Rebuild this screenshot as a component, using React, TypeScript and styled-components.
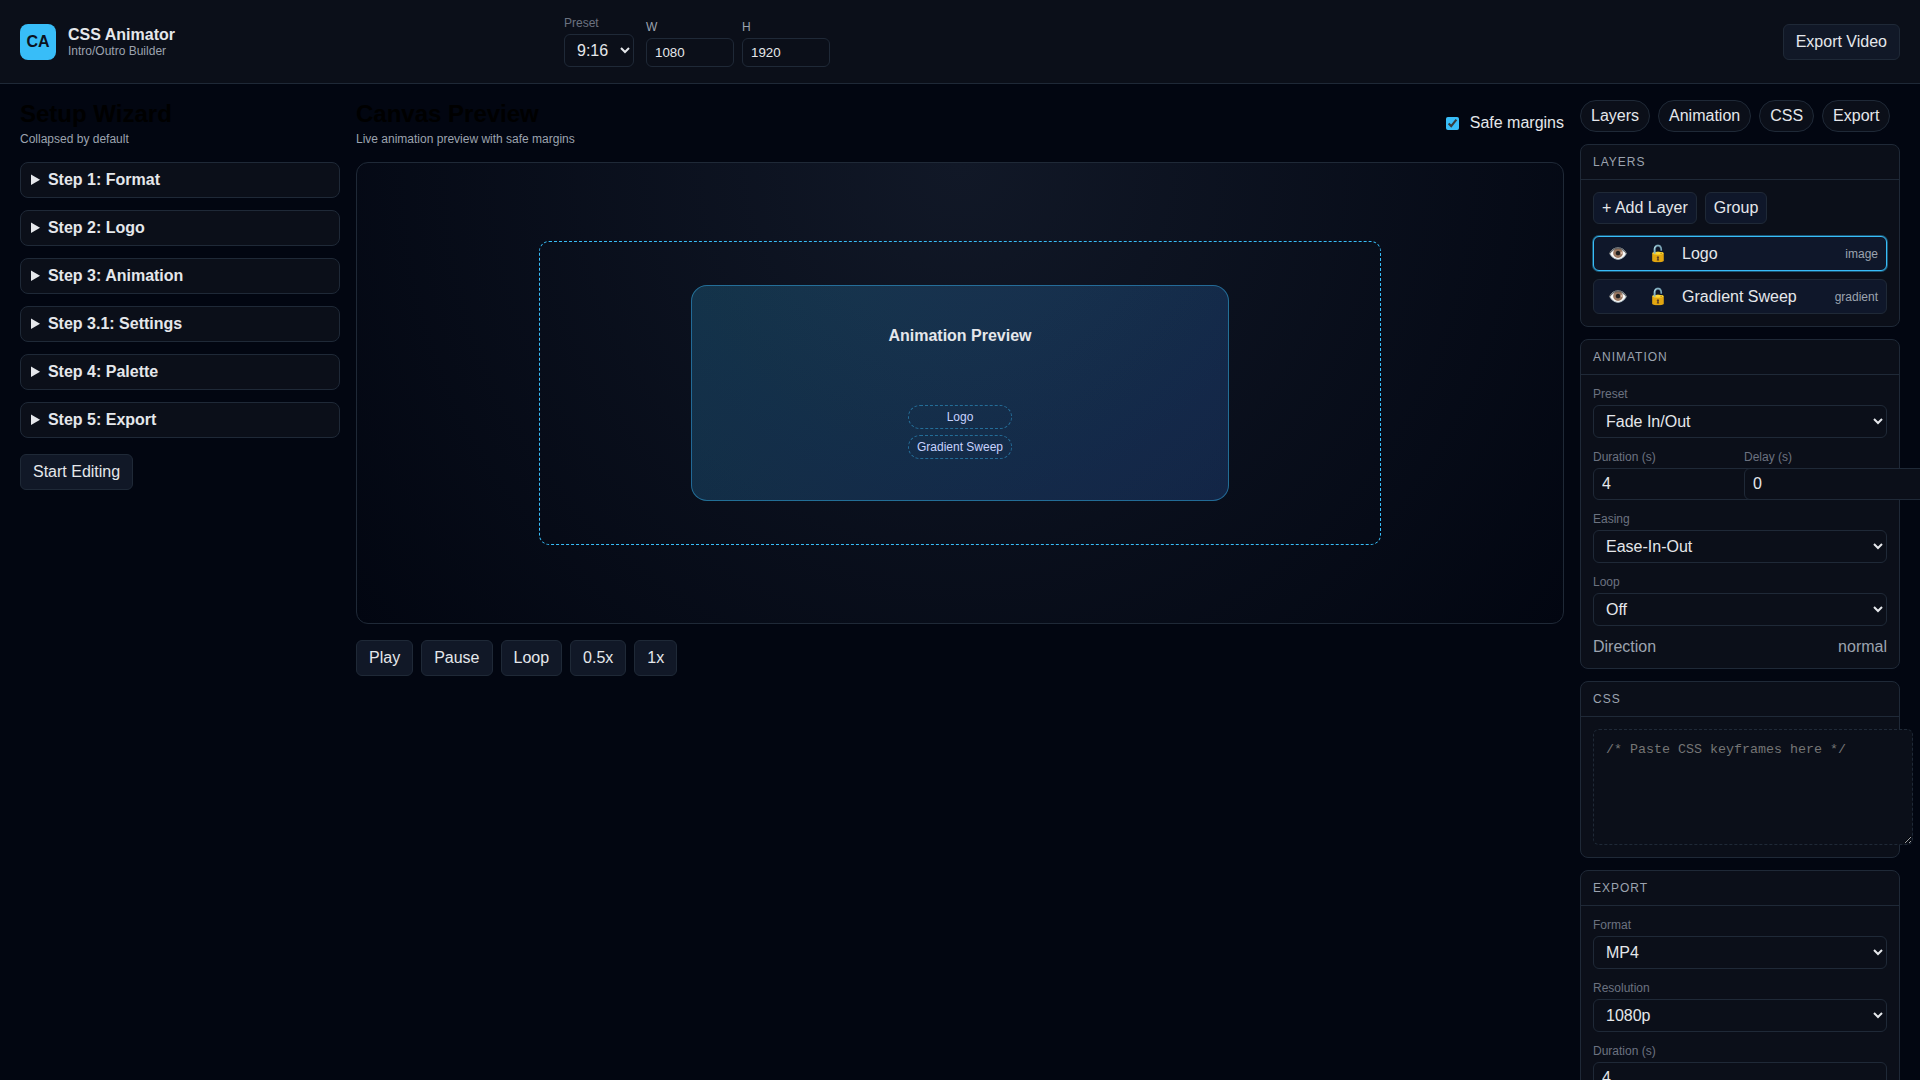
import React, { useState } from "react";
import styled, { createGlobalStyle, css } from "styled-components";

const color = {
  page: "#020611",
  panel: "#0b0f19",
  raised: "#111827",
  row: "#0f172a",
  line: "#1f2937",
  text: "#e5e7eb",
  muted: "#9ca3af",
  faint: "#6b7280",
  accent: "#38bdf8",
};

const GlobalStyle = createGlobalStyle`
  body {
    margin: 0;
    background: ${color.page};
    font-family: "Liberation Sans", Arial, sans-serif;
    overflow-x: hidden;
  }
`;

const Header = styled.header`
  display: grid;
  grid-template-columns: 1.2fr 2fr 1fr;
  align-items: center;
  gap: 16px;
  padding: 16px 20px;
  background: ${color.panel};
  border-bottom: 1px solid ${color.line};
  color: ${color.text};
`;

const Brand = styled.div`
  display: flex;
  align-items: center;
  gap: 12px;
`;

const BrandMark = styled.div`
  display: grid;
  place-items: center;
  width: 36px;
  height: 36px;
  border-radius: 8px;
  background: ${color.accent};
  color: #0b1220;
  font-weight: 700;
`;

const BrandName = styled.div`
  font-weight: 700;
`;

const Caption = styled.div`
  font-size: 12px;
  color: ${color.muted};
`;

const FormatControls = styled.div`
  display: flex;
  align-items: flex-end;
  gap: 12px;
`;

const SizeControls = styled.div`
  display: flex;
  gap: 8px;
`;

const HeaderActions = styled.div`
  display: flex;
  justify-content: flex-end;
`;

const Field = styled.label<{ $strong?: boolean }>`
  display: grid;
  gap: 4px;
  font-size: 12px;
  color: ${(p) => (p.$strong ? color.muted : color.faint)};
`;

const control = css`
  padding: 6px 8px;
  border: 1px solid ${color.line};
  border-radius: 6px;
  background: ${color.panel};
  color: ${color.text};
  font-family: inherit;
`;

const Select = styled.select`
  ${control}
  font-size: 16px;
`;

const Input = styled.input`
  ${control}
  font-size: 16px;
`;

const SizeInput = styled.input`
  ${control}
  box-sizing: border-box;
  width: 88px;
`;

const Button = styled.button`
  padding: 8px 12px;
  border: 1px solid ${color.line};
  border-radius: 6px;
  background: ${color.raised};
  color: ${color.text};
  font-family: inherit;
  font-size: 16px;
  cursor: pointer;
`;

const SmallButton = styled(Button)`
  padding: 6px 8px;
  background: ${color.row};
`;

const TabButton = styled(Button)`
  padding: 6px 10px;
  border-radius: 999px;
  background: ${color.panel};
`;

const Workspace = styled.main`
  display: grid;
  grid-template-columns: 320px minmax(0, 1fr) 320px;
  align-items: start;
  gap: 16px;
  padding: 16px 20px;
`;

const Column = styled.section`
  display: grid;
  gap: 16px;
`;

const Heading = styled.div`
  display: grid;
  gap: 4px;
`;

const Title = styled.h2`
  margin: 0;
  font-size: 24px;
  color: #000;
`;

const HeadingRow = styled.div`
  display: flex;
  align-items: center;
  justify-content: space-between;
`;

const StepList = styled.div`
  display: grid;
  gap: 12px;
`;

const Step = styled.details`
  padding: 8px 10px;
  border: 1px solid ${color.line};
  border-radius: 8px;
  background: ${color.panel};
  color: ${color.text};
`;

const StepSummary = styled.summary`
  font-weight: 700;
  cursor: pointer;
`;

const CheckLabel = styled.label`
  display: flex;
  align-items: center;
  gap: 8px;
  color: ${color.text};
`;

const Checkbox = styled.input`
  accent-color: ${color.accent};
`;

const ButtonRow = styled.div`
  display: flex;
  flex-wrap: wrap;
  justify-content: flex-start;
  gap: 8px;
`;

const Canvas = styled.div`
  display: grid;
  padding: 78px calc(15% + 1px);
  border: 1px solid ${color.line};
  border-radius: 12px;
  background: radial-gradient(circle at top, ${color.raised}, ${color.page});
`;

const SafeArea = styled.div<{ $visible: boolean }>`
  display: grid;
  justify-items: center;
  padding: 43px 0;
  border: 1px dashed ${(p) => (p.$visible ? color.accent : "transparent")};
  border-radius: 10px;
`;

const Stage = styled.div`
  display: flex;
  flex-direction: column;
  align-items: center;
  justify-content: space-between;
  box-sizing: border-box;
  width: 64%;
  min-height: 216px;
  padding: 41px 24px;
  border: 1px solid rgba(56, 189, 248, 0.45);
  border-radius: 16px;
  background: linear-gradient(135deg, rgba(56, 189, 248, 0.2), rgba(59, 130, 246, 0.2));
  color: ${color.text};
`;

const StageTitle = styled.div`
  font-weight: 700;
`;

const ChipList = styled.div`
  display: grid;
  gap: 6px;
`;

const Chip = styled.div`
  padding: 4px 8px;
  border: 1px dashed rgba(56, 189, 248, 0.45);
  border-radius: 999px;
  font-size: 12px;
  text-align: center;
  color: #c7d2fe;
`;

const Inspector = styled.aside`
  display: grid;
  gap: 12px;
`;

const Card = styled.section`
  border: 1px solid ${color.line};
  border-radius: 8px;
  background: ${color.panel};
  color: ${color.text};
`;

const CardHeader = styled.header`
  padding: 10px 12px;
  border-bottom: 1px solid ${color.line};
  font-size: 12px;
  letter-spacing: 1px;
  text-transform: uppercase;
  color: ${color.muted};
`;

const CardBody = styled.div`
  display: grid;
  gap: 12px;
  padding: 12px;
`;

const LayerList = styled.div`
  display: grid;
  gap: 8px;
`;

const LayerRow = styled.div<{ $selected: boolean }>`
  display: grid;
  grid-template-columns: 32px 32px 1fr auto;
  align-items: center;
  gap: 8px;
  padding: 6px 8px;
  border: 1px solid ${(p) => (p.$selected ? color.accent : color.line)};
  border-radius: 6px;
  background: ${color.row};
  box-shadow: ${(p) => (p.$selected ? "0 0 0 1px rgba(56, 189, 248, 0.4)" : "none")};
  cursor: pointer;
`;

const IconButton = styled.button`
  border: none;
  background: none;
  color: ${color.text};
  font-family: inherit;
  font-size: 16px;
  cursor: pointer;
`;

const TwoColumns = styled.div`
  display: grid;
  grid-template-columns: repeat(2, minmax(0, 1fr));
  gap: 8px;
`;

const Readout = styled.div`
  display: flex;
  justify-content: space-between;
  color: ${color.muted};
`;

const CodeArea = styled.textarea`
  display: block;
  width: 100%;
  height: 90px;
  padding: 12px;
  border: 1px dashed ${color.line};
  border-radius: 6px;
  background: ${color.panel};
  color: ${color.text};
  font-family: "Liberation Mono", "Courier New", monospace;
`;

const steps = [
  "Step 1: Format",
  "Step 2: Logo",
  "Step 3: Animation",
  "Step 3.1: Settings",
  "Step 4: Palette",
  "Step 5: Export",
];

const layers = [
  { name: "Logo", kind: "image" },
  { name: "Gradient Sweep", kind: "gradient" },
];

const tabs = ["Layers", "Animation", "CSS", "Export"];
const transport = ["Play", "Pause", "Loop", "0.5x", "1x"];

function SelectField({ label, value }: { label: string; value: string }) {
  return (
    <Field>
      {label}
      <Select defaultValue={value}>
        <option>{value}</option>
      </Select>
    </Field>
  );
}

function NumberField({ label, value }: { label: string; value: number }) {
  return (
    <Field>
      {label}
      <Input type="number" defaultValue={value} />
    </Field>
  );
}

function Panel({ title, children }: { title: string; children: React.ReactNode }) {
  return (
    <Card>
      <CardHeader>{title}</CardHeader>
      <CardBody>{children}</CardBody>
    </Card>
  );
}

export default function App() {
  const [safe, setSafe] = useState(true);
  const [selected, setSelected] = useState("Logo");

  return (
    <>
      <GlobalStyle />
      <Header>
        <Brand>
          <BrandMark>CA</BrandMark>
          <div>
            <BrandName>CSS Animator</BrandName>
            <Caption>Intro/Outro Builder</Caption>
          </div>
        </Brand>
        <FormatControls>
          <SelectField label="Preset" value="9:16" />
          <SizeControls>
            <Field $strong>
              W
              <SizeInput type="number" defaultValue={1080} />
            </Field>
            <Field $strong>
              H
              <SizeInput type="number" defaultValue={1920} />
            </Field>
          </SizeControls>
        </FormatControls>
        <HeaderActions>
          <Button type="button">Export Video</Button>
        </HeaderActions>
      </Header>

      <Workspace>
        <Column>
          <Heading>
            <Title>Setup Wizard</Title>
            <Caption>Collapsed by default</Caption>
          </Heading>
          <StepList>
            {steps.map((step) => (
              <Step key={step}>
                <StepSummary>{step}</StepSummary>
              </Step>
            ))}
          </StepList>
          <ButtonRow>
            <Button type="button">Start Editing</Button>
          </ButtonRow>
        </Column>

        <Column>
          <HeadingRow>
            <Heading>
              <Title>Canvas Preview</Title>
              <Caption>Live animation preview with safe margins</Caption>
            </Heading>
            <CheckLabel>
              <Checkbox type="checkbox" checked={safe} onChange={(e) => setSafe(e.target.checked)} />
              Safe margins
            </CheckLabel>
          </HeadingRow>
          <Canvas>
            <SafeArea $visible={safe}>
              <Stage>
                <StageTitle>Animation Preview</StageTitle>
                <ChipList>
                  {layers.map((layer) => (
                    <Chip key={layer.name}>{layer.name}</Chip>
                  ))}
                </ChipList>
              </Stage>
            </SafeArea>
          </Canvas>
          <ButtonRow>
            {transport.map((name) => (
              <Button type="button" key={name}>
                {name}
              </Button>
            ))}
          </ButtonRow>
        </Column>

        <Inspector>
          <ButtonRow>
            {tabs.map((name) => (
              <TabButton type="button" key={name}>
                {name}
              </TabButton>
            ))}
          </ButtonRow>

          <Panel title="Layers">
            <ButtonRow>
              <SmallButton type="button">+ Add Layer</SmallButton>
              <SmallButton type="button">Group</SmallButton>
            </ButtonRow>
            <LayerList>
              {layers.map((layer) => (
                <LayerRow
                  key={layer.name}
                  $selected={layer.name === selected}
                  onClick={() => setSelected(layer.name)}
                >
                  <IconButton type="button" aria-label={`Toggle visibility of ${layer.name}`}>
                    👁️
                  </IconButton>
                  <IconButton type="button" aria-label={`Toggle lock on ${layer.name}`}>
                    🔓
                  </IconButton>
                  <span>{layer.name}</span>
                  <Caption>{layer.kind}</Caption>
                </LayerRow>
              ))}
            </LayerList>
          </Panel>

          <Panel title="Animation">
            <SelectField label="Preset" value="Fade In/Out" />
            <TwoColumns>
              <NumberField label="Duration (s)" value={4} />
              <NumberField label="Delay (s)" value={0} />
            </TwoColumns>
            <SelectField label="Easing" value="Ease-In-Out" />
            <SelectField label="Loop" value="Off" />
            <Readout>
              <span>Direction</span>
              <span>normal</span>
            </Readout>
          </Panel>

          <Panel title="CSS">
            <CodeArea aria-label="CSS keyframes" placeholder="/* Paste CSS keyframes here */" />
          </Panel>

          <Panel title="Export">
            <SelectField label="Format" value="MP4" />
            <SelectField label="Resolution" value="1080p" />
            <NumberField label="Duration (s)" value={4} />
          </Panel>
        </Inspector>
      </Workspace>
    </>
  );
}
